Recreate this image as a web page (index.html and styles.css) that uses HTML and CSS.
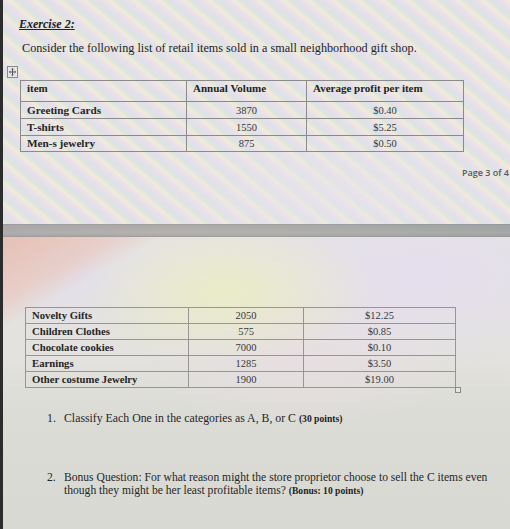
FILE: index.html
```html
<!DOCTYPE html>
<html lang="en">
<head>
<meta charset="utf-8">
<title>Exercise 2</title>
<link rel="stylesheet" href="styles.css">
</head>
<body>
<main class="sheet">
  <section class="upper">
    <h1 class="title">Exercise 2:</h1>
    <p class="intro">Consider the following list of retail items sold in a small neighborhood gift shop.</p>
    <div class="table-wrap wrap-1">
      <svg class="move-handle" width="11" height="12" viewBox="0 0 11 12" aria-hidden="true">
        <rect x="0.5" y="0.5" width="10" height="11" fill="#e8e6e6" stroke="#8a8a8a"/>
        <path d="M5.5 2.5v7M2.5 6h6" stroke="#555" stroke-width="1"/>
        <path d="M4.3 3.4l1.2-1.2 1.2 1.2M4.3 8.6l1.2 1.2 1.2-1.2M3.4 4.8L2.2 6l1.2 1.2M7.6 4.8L8.8 6 7.6 7.2" stroke="#555" stroke-width="0.8" fill="none"/>
      </svg>
      <table class="items items-1">
        <colgroup><col class="w1a"><col class="w1b"><col class="w1c"></colgroup>
        <tr class="head"><th>item</th><th>Annual Volume</th><th>Average profit per item</th></tr>
        <tr class="r17"><td class="name">Greeting Cards</td><td class="num">3870</td><td class="num">$0.40</td></tr>
        <tr class="r17"><td class="name">T-shirts</td><td class="num">1550</td><td class="num">$5.25</td></tr>
        <tr class="r16"><td class="name">Men-s jewelry</td><td class="num">875</td><td class="num">$0.50</td></tr>
      </table>
    </div>
    <p class="page-num">Page 3 of 4</p>
  </section>
  <div class="page-break"></div>
  <section class="lower">
    <div class="table-wrap wrap-2">
      <table class="items items-2">
        <colgroup><col class="w2a"><col class="w2b"><col class="w2c"></colgroup>
        <tr><td class="name">Novelty Gifts</td><td class="num">2050</td><td class="num">$12.25</td></tr>
        <tr><td class="name">Children Clothes</td><td class="num">575</td><td class="num">$0.85</td></tr>
        <tr><td class="name">Chocolate cookies</td><td class="num">7000</td><td class="num">$0.10</td></tr>
        <tr><td class="name">Earnings</td><td class="num">1285</td><td class="num">$3.50</td></tr>
        <tr><td class="name">Other costume Jewelry</td><td class="num">1900</td><td class="num">$19.00</td></tr>
      </table>
      <span class="resize-handle"></span>
    </div>
    <ol class="questions">
      <li class="q q1"><span class="q-text">Classify Each One in the categories as A, B, or C <b class="pts">(30 points)</b></span></li>
      <li class="q q2"><span class="q-text">Bonus Question: For what reason might the store proprietor choose to sell the C items even though they might be her least profitable items? <b class="pts">(Bonus: 10 points)</b></span></li>
    </ol>
  </section>
</main>
</body>
</html>
```

FILE: styles.css
```css
html, body {
  margin: 0;
  padding: 0;
}

body {
  width: 510px;
  height: 529px;
  overflow: hidden;
  background: #dddcd8;
  font-family: "Liberation Serif", "Times New Roman", serif;
  color: #2b2b2b;
}

.sheet {
  position: relative;
  width: 510px;
  height: 529px;
  overflow: hidden;
  border-left: 3px solid #2c2c2c;
  box-sizing: border-box;
}

.upper {
  height: 224px;
  box-sizing: border-box;
  padding-top: 17px;
  background:
    radial-gradient(ellipse 200px 60px at 330px 190px, rgba(232, 228, 236, 0.6), rgba(232, 228, 236, 0)),
    repeating-linear-gradient(40deg,
      rgba(250, 242, 212, 0.55) 0px,
      rgba(214, 232, 216, 0.5) 4px,
      rgba(224, 222, 242, 0.6) 8px,
      rgba(242, 226, 232, 0.5) 12px,
      rgba(250, 242, 212, 0.55) 16px),
    #e3e2e4;
}

.title {
  margin: 0 0 0 16px;
  font-size: 12px;
  line-height: 14px;
  font-weight: bold;
  font-style: italic;
  text-decoration: underline;
  color: #222;
}

.intro {
  margin: 10px 0 0 19px;
  font-size: 12.2px;
  line-height: 14px;
  color: #242424;
}

.table-wrap {
  position: relative;
  width: max-content;
}

.wrap-1 {
  margin: 25px 0 0 17px;
}

.move-handle {
  position: absolute;
  left: -13px;
  top: -14px;
  display: block;
}

.items {
  border-collapse: collapse;
  table-layout: fixed;
}

.items th,
.items td {
  padding: 0 6px;
  white-space: nowrap;
  overflow: hidden;
}

.items-1 th,
.items-1 td {
  border: 1px solid #8b8b8b;
}

.items-1 .w1a { width: 166px; }
.items-1 .w1b { width: 120px; }
.items-1 .w1c { width: 157px; }

.items-1 .head th {
  height: 19px;
  text-align: left;
  vertical-align: top;
  padding-top: 1px;
  font-size: 11px;
  line-height: 13px;
  font-weight: bold;
  color: #222;
}

.items-1 .r17 td { height: 16px; }
.items-1 .r16 td { height: 15px; }

.items-1 td {
  font-size: 11.2px;
  line-height: 13px;
  padding-top: 0;
  padding-bottom: 0;
}

.name {
  font-weight: bold;
  color: #262626;
  text-align: left;
}

.num {
  text-align: center;
  font-size: 10.5px !important;
  color: #383838;
}

.page-num {
  margin: 15px 0 0 459px;
  font-family: "Open Sans", "Liberation Sans", sans-serif;
  font-size: 9px;
  line-height: 12px;
  font-weight: 600;
  color: #5a5a5a;
  white-space: nowrap;
}

.page-break {
  height: 13px;
  background:
    linear-gradient(90deg, rgba(175, 170, 175, 0.3), rgba(200, 192, 178, 0.25) 35%, rgba(170, 175, 170, 0.3) 70%, rgba(150, 160, 155, 0.35)),
    linear-gradient(180deg, #8b8b8c 0, #a4a4a6 1px, #afaeae 9px, #a1a1a1 12px, #8c8c8c 13px);
}

.lower {
  height: 292px;
  box-sizing: border-box;
  padding-top: 70px;
  background:
    linear-gradient(150deg, rgba(230, 178, 160, 0.7) 0, rgba(234, 192, 178, 0.55) 55px, rgba(236, 200, 190, 0) 80px),
    radial-gradient(ellipse 150px 70px at 220px 55px, rgba(236, 238, 196, 0.85), rgba(236, 238, 196, 0)),
    radial-gradient(ellipse 180px 90px at 420px 40px, rgba(228, 222, 240, 0.9), rgba(228, 222, 240, 0)),
    radial-gradient(ellipse 120px 60px at 90px 40px, rgba(226, 222, 238, 0.8), rgba(226, 222, 238, 0)),
    radial-gradient(ellipse 160px 70px at 300px 120px, rgba(232, 222, 226, 0.8), rgba(232, 222, 226, 0)),
    linear-gradient(180deg, #e6e2e3 0, #e3e2de 40%, #dcdcd7 60%, #d9d9d4 100%);
}

.wrap-2 {
  margin-left: 22px;
}

.items-2 td {
  border: 1px solid #969696;
  height: 15px;
  font-size: 10.7px;
  line-height: 13px;
  padding: 0 6px;
}

.items-2 .w2a { width: 163px; }
.items-2 .w2b { width: 115px; }
.items-2 .w2c { width: 152px; }

.resize-handle {
  position: absolute;
  left: 430px;
  bottom: -5px;
  width: 4px;
  height: 4px;
  border: 1px solid #8a8a8a;
  background: #e6e6e6;
}

.questions {
  list-style: none;
  counter-reset: q;
  margin: 23px 0 0 0;
  padding: 0 0 0 44px;
}

.q {
  counter-increment: q;
  display: grid;
  grid-template-columns: 17px 1fr;
  font-size: 11.8px;
  color: #262626;
}

.q::before {
  content: counter(q) ".";
}

.q1 {
  line-height: 14px;
}

.q2 {
  margin-top: 47px;
  font-size: 11.6px;
  line-height: 12.5px;
  width: 450px;
}

.pts {
  font-size: 9.6px;
  line-height: 1;
  font-weight: bold;
  color: #1e1e1e;
}
```
